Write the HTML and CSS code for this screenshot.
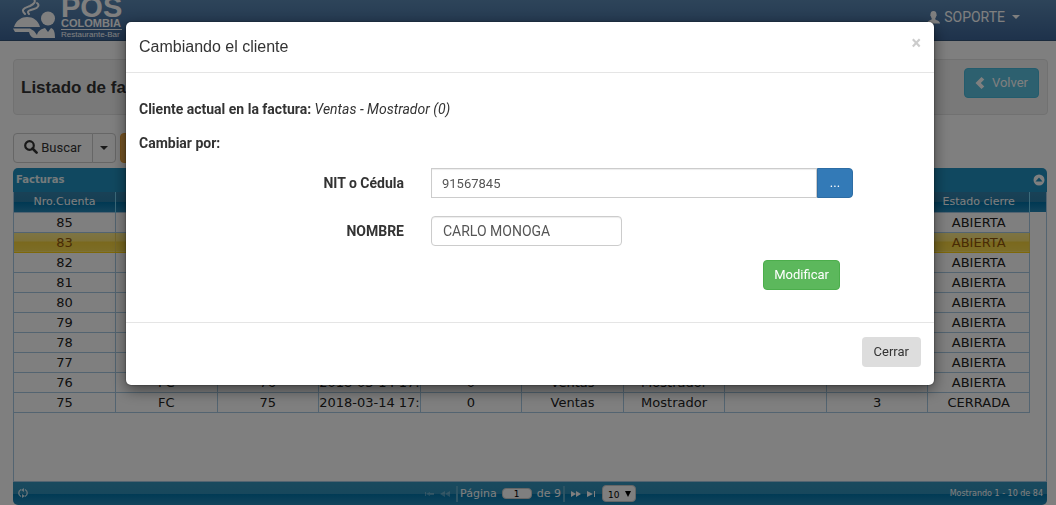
FILE: index.html
```html
<!DOCTYPE html>
<html lang="es">
<head>
    <meta charset="UTF-8">
    <meta name="viewport" content="width=device-width, initial-scale=1.0">
    <title>POS Colombia - Listado de facturas</title>
    <link rel="stylesheet" href="styles.css">
</head>
<body>

<!-- Barra superior -->
<nav class="navbar">
    <a href="#" class="brand">
        <svg class="brand-icon" width="43" height="40" viewBox="0 0 43 40">
            <g fill="none" stroke="#fff" stroke-width="2" stroke-linecap="round">
                <path d="M12 14C7 9 12 8 17 6C21 4 23 2 21 -1"/>
                <path d="M16 14C13 11 17 10 21 9C25 8 27 5 24 3"/>
            </g>
            <path fill="#fff" d="M1 27C3 20 9 17 14 17C20 17 25 20 27 27Z"/>
            <path fill="#fff" d="M0 28.500H17L21 31L24 35C25 31 28 29 32 28L35 32L38 28C41 29 42 32 42 38H22C19 38 17 36 16 32H2Z"/>
            <circle fill="#fff" cx="35" cy="18.500" r="7"/>
        </svg>
        <span class="brand-text">
            <span class="brand-pos">POS</span>
            <span class="brand-name">COLOMBIA</span>
            <span class="brand-sub">Restaurante-Bar</span>
        </span>
    </a>
    <a href="#" class="user-menu">
        <svg width="13" height="13" viewBox="0 0 13 13"><path fill="currentColor" d="M6.500 0C8.700 0 9.600 1.600 9.500 3.500C9.900 3.800 9.700 5 9.200 5.300C9 6.500 8.200 7.200 8.200 8C8.200 9.300 13 9.300 13 12.500H0C0 9.300 4.800 9.300 4.800 8C4.800 7.200 4 6.500 3.800 5.300C3.300 5 3.100 3.800 3.500 3.500C3.400 1.600 4.300 0 6.500 0Z"/></svg>
        <span>SOPORTE</span>
        <span class="caret"></span>
    </a>
</nav>

<main class="page">
    <div class="well">
        <h1>Listado de facturas</h1>
        <button type="button" class="btn btn-info">
            <svg width="10" height="12" viewBox="0 0 10 12"><path fill="currentColor" d="M6.500 0L9.300 2.500L5.800 6L9.300 9.500L6.500 12L0.500 6Z"/></svg>
            Volver
        </button>
    </div>

    <div class="toolbar">
        <div class="btn-group">
            <button type="button" class="btn btn-default">
                <svg width="14" height="14" viewBox="0 0 14 14"><circle cx="5.500" cy="5.500" r="4.300" fill="none" stroke="currentColor" stroke-width="2.200"/><path d="M8.500 8.500L12.600 12.600" stroke="currentColor" stroke-width="2.600" stroke-linecap="round"/></svg>
                Buscar
            </button>
            <button type="button" class="btn btn-default btn-toggle" aria-label="Opciones"><span class="caret"></span></button>
        </div>
        <button type="button" class="btn btn-warning" aria-label="Cambiar cliente">
            <svg width="14" height="14" viewBox="0 0 14 14"><path fill="currentColor" d="M0 14V10L9 1L13 5L4 14Z"/></svg>
        </button>
    </div>

    <!-- Grid de facturas -->
    <section class="grid">
        <div class="grid-title">
            <span>Facturas</span>
            <svg width="12" height="12" viewBox="0 0 12 12"><circle cx="6" cy="6" r="5.500" fill="#fff"/><path fill="#2191c0" d="M6 3.500L9.500 7.500H2.500Z"/></svg>
        </div>
        <div class="grid-head"></div>
        <div class="grid-body">
            <table>
                <thead>
                    <tr><th>Nro.Cuenta</th><th>Tipo</th><th>Numero</th><th>Fecha</th><th>Cliente</th><th>Nombre</th><th>Apellido</th><th>Mesa</th><th>Cierre</th><th>Estado cierre</th></tr>
                </thead>
                <tbody>
                    <tr><td>85</td><td>FC</td><td>85</td><td>2018-03-14 17:</td><td>0</td><td>Ventas</td><td>Mostrador</td><td></td><td></td><td>ABIERTA</td></tr>
                    <tr class="selected"><td>83</td><td>FC</td><td>83</td><td>2018-03-14 17:</td><td>0</td><td>Ventas</td><td>Mostrador</td><td></td><td></td><td>ABIERTA</td></tr>
                    <tr><td>82</td><td>FC</td><td>82</td><td>2018-03-14 17:</td><td>0</td><td>Ventas</td><td>Mostrador</td><td></td><td></td><td>ABIERTA</td></tr>
                    <tr><td>81</td><td>FC</td><td>81</td><td>2018-03-14 17:</td><td>0</td><td>Ventas</td><td>Mostrador</td><td></td><td></td><td>ABIERTA</td></tr>
                    <tr><td>80</td><td>FC</td><td>80</td><td>2018-03-14 17:</td><td>0</td><td>Ventas</td><td>Mostrador</td><td></td><td></td><td>ABIERTA</td></tr>
                    <tr><td>79</td><td>FC</td><td>79</td><td>2018-03-14 17:</td><td>0</td><td>Ventas</td><td>Mostrador</td><td></td><td></td><td>ABIERTA</td></tr>
                    <tr><td>78</td><td>FC</td><td>78</td><td>2018-03-14 17:</td><td>0</td><td>Ventas</td><td>Mostrador</td><td></td><td></td><td>ABIERTA</td></tr>
                    <tr><td>77</td><td>FC</td><td>77</td><td>2018-03-14 17:</td><td>0</td><td>Ventas</td><td>Mostrador</td><td></td><td></td><td>ABIERTA</td></tr>
                    <tr><td>76</td><td>FC</td><td>76</td><td>2018-03-14 17:</td><td>0</td><td>Ventas</td><td>Mostrador</td><td></td><td></td><td>ABIERTA</td></tr>
                    <tr><td>75</td><td>FC</td><td>75</td><td>2018-03-14 17:</td><td>0</td><td>Ventas</td><td>Mostrador</td><td></td><td>3</td><td>CERRADA</td></tr>
                </tbody>
            </table>
        </div>
        <div class="pager">
            <div class="pager-side">
                <svg width="10" height="10" viewBox="0 0 10 10"><g fill="none" stroke="#d0e8f2" stroke-width="1.300"><path d="M3 1.500C0 3 0 7 3 8.500M7 1.500C10 3 10 7 7 8.500"/></g><path fill="#d0e8f2" d="M6 0L3 2L6 4ZM4 6L7 8L4 10Z"/></svg>
            </div>
            <div class="pager-center">
                <svg class="off" width="9" height="6" viewBox="0 0 9 6"><path fill="#fff" d="M0 1H1V5H0ZM1 3L5 1V5ZM5 2H9V4H5Z"/></svg>
                <svg class="off" width="10" height="6" viewBox="0 0 10 6"><path fill="#fff" d="M0 3L5 0V6ZM5 3L10 0V6Z"/></svg>
                <span class="pager-page">
                    <label for="pagina">Página</label>
                    <input type="text" id="pagina" value="1">
                    <span>de 9</span>
                </span>
                <svg width="10" height="6" viewBox="0 0 10 6"><path fill="#fff" d="M0 0L5 3L0 6ZM5 0L10 3L5 6Z"/></svg>
                <svg width="9" height="6" viewBox="0 0 9 6"><path fill="#fff" d="M0 0L6 3L0 6ZM7 0H8V6H7Z"/></svg>
                <span class="pager-rows">
                    <select aria-label="Filas por página">
                        <option>10</option>
                        <option>20</option>
                        <option>30</option>
                    </select>
                    <svg width="6" height="6" viewBox="0 0 6 6"><path d="M0 0H6L3 6Z"/></svg>
                </span>
            </div>
            <div class="pager-side pager-info">Mostrando 1 - 10 de 84</div>
        </div>
    </section>
</main>

<!-- Modal cambiar cliente -->
<div class="modal-overlay">
    <div class="modal" role="dialog" aria-labelledby="modalTitle">
        <div class="modal-header">
            <h2 id="modalTitle">Cambiando el cliente</h2>
            <button type="button" class="close" aria-label="Cerrar ventana">×</button>
        </div>
        <form class="modal-body">
            <p><b>Cliente actual en la factura:</b> <i>Ventas - Mostrador (0)</i></p>
            <p><b>Cambiar por:</b></p>
            <div class="form-row">
                <label for="nit">NIT o Cédula</label>
                <div class="input-group">
                    <input type="text" id="nit" class="form-control" value="91567845">
                    <button type="button" class="btn btn-primary">...</button>
                </div>
            </div>
            <div class="form-row">
                <label for="nombre">NOMBRE</label>
                <input type="text" id="nombre" class="form-control name" value="CARLO MONOGA">
            </div>
            <div class="form-actions">
                <button type="button" class="btn btn-success">Modificar</button>
            </div>
        </form>
        <div class="modal-footer">
            <button type="button" class="btn btn-close">Cerrar</button>
        </div>
    </div>
</div>

</body>
</html>
```
FILE: styles.css
```css
* {
    box-sizing: border-box;
}
body {
    margin: 0;
    font-family: Roboto, "Liberation Sans", Arial, sans-serif;
    font-size: 13px;
    line-height: 18px;
    color: #333;
    background: #fff;
    overflow: hidden;
}
svg {
    flex: none;
}
button, input, select {
    font: inherit;
}

/* Navbar */
.navbar {
    display: flex;
    justify-content: space-between;
    height: 41px;
    padding: 0 36px 0 13px;
    background: linear-gradient(#5c89b4, #3d6597);
    border-bottom: 1px solid #345578;
    overflow: hidden;
}
.navbar a {
    color: #fff;
    text-decoration: none;
}
.brand {
    display: flex;
    gap: 5px;
}
.brand-text {
    display: flex;
    flex-direction: column;
    justify-content: flex-end;
    width: 61px;
    font-family: "Liberation Sans", Arial, sans-serif;
    white-space: nowrap;
}
.brand-pos {
    font-size: 29px;
    font-weight: bold;
    line-height: 22px;
}
.brand-name {
    font-size: 11px;
    font-weight: bold;
    line-height: 11px;
    border-bottom: 1px solid #fff;
}
.brand-sub {
    font-size: 8px;
    line-height: 10px;
}
.user-menu {
    display: flex;
    align-items: center;
    align-self: flex-start;
    gap: 4px;
    height: 34px;
    font-size: 14px;
}
.caret {
    border: 4px solid transparent;
    border-top-color: currentColor;
    border-bottom: 0;
}
.user-menu .caret {
    margin-left: 3px;
}

/* Page */
.page {
    padding: 18px 8px 0 13px;
}
.well {
    display: flex;
    justify-content: space-between;
    align-items: flex-start;
    height: 56px;
    padding: 8px 8px 8px 7px;
    background: #f3f3f3;
    border: 1px solid #e3e3e3;
    border-radius: 4px;
}
.well h1 {
    margin: 8px 0 0;
    font-family: "Liberation Sans", Arial, sans-serif;
    font-size: 17px;
    line-height: 24px;
}
.btn {
    height: 30px;
    padding: 0 10px;
    border: 1px solid transparent;
    border-radius: 4px;
    color: #fff;
    white-space: nowrap;
}
.btn svg {
    vertical-align: -2px;
}
.btn-info {
    background: #5bc0de;
    border-color: #46b8da;
}
.btn-info svg {
    margin-right: 4px;
}
.btn-default {
    background: #fff;
    border-color: #ccc;
    color: #333;
}
.btn-warning {
    background: #f0ad4e;
    border-color: #eea236;
}
.btn-primary {
    background: #337ab7;
    border-color: #2e6da4;
}
.btn-success {
    background: #5cb85c;
    border-color: #4cae4c;
}
.btn-close {
    padding: 0 11px;
    background: #ddd;
    color: #333;
}
.toolbar {
    display: flex;
    gap: 4px;
    margin: 18px 0 5px;
}
.btn-group {
    display: flex;
}
.btn-group .btn:first-child {
    padding-right: 11px;
    border-radius: 4px 0 0 4px;
}
.btn-group .btn-toggle {
    display: flex;
    align-items: center;
    margin-left: -1px;
    padding: 0 7px;
    border-radius: 0 4px 4px 0;
}

/* Grid */
.grid {
    margin-right: 1px;
    font-family: Verdana, "DejaVu Sans", sans-serif;
    font-size: 13px;
}
.grid-title {
    display: flex;
    justify-content: space-between;
    align-items: center;
    height: 24px;
    padding: 0 2px 0 3px;
    background: #2191c0;
    border-radius: 5px 5px 0 0;
    color: #eaf5f7;
    font-size: 10px;
    font-weight: bold;
}
.grid-head {
    height: 20px;
    margin-bottom: -20px;
    background: linear-gradient(#3383ad, #2b7fa9 50%, #0070a5 50%, #2588b8);
}
.grid-body {
    height: 290px;
    padding-right: 16px;
    border: 1px solid #a6c9e2;
    border-top: 0;
}
.grid table {
    position: relative;
    width: 100%;
    table-layout: fixed;
    border-collapse: collapse;
}
.grid th {
    height: 20px;
    padding: 0;
    border-right: 1px solid #77d5f7;
    color: #fff;
    font-size: 11px;
    font-weight: normal;
    white-space: nowrap;
}
.grid td {
    height: 20px;
    padding: 0;
    border: 1px solid #a6c9e2;
    border-left: 0;
    color: #222;
    line-height: 19px;
    text-align: center;
    white-space: nowrap;
    overflow: hidden;
}
.grid .selected td {
    background: linear-gradient(#fbe98c, #f9e06c 50%, #f5d23c 50%, #f8da4e);
    border-right-color: #e5cd5a;
    border-bottom-color: #fcd113;
    color: #915608;
}
.pager {
    display: flex;
    align-items: center;
    height: 23px;
    padding: 0 4px 0 5px;
    background: linear-gradient(#3394bd, #308fb8 50%, #0074a9 50%, #2589b8);
    border-radius: 0 0 5px 5px;
    color: #fff;
    font-size: 11px;
}
.pager-side {
    flex: 1;
    line-height: 10px;
}
.pager-center {
    display: flex;
    align-items: center;
    gap: 6px;
}
.pager-center .off {
    opacity: 0.3;
}
.pager-page {
    display: flex;
    align-items: center;
    gap: 5px;
    height: 16px;
    padding: 0 2px;
    border: 2px solid #5aa9c9;
    border-width: 0 2px;
}
.pager-center input {
    width: 30px;
    height: 11px;
    padding: 0;
    border: 1px solid #ccc;
    border-radius: 4px;
    font-size: 9px;
    text-align: center;
}
.pager-rows {
    display: flex;
    align-items: center;
}
.pager-rows select {
    appearance: none;
    width: 34px;
    height: 17px;
    padding: 0 0 0 5px;
    border: 1px solid #ccc;
    border-radius: 4px;
    background: #fff;
    color: #000;
    font-size: 9px;
}
.pager-rows svg {
    margin-left: -11px;
    margin-right: 5px;
    pointer-events: none;
}
.pager-info {
    font-size: 8px;
    text-align: right;
}

/* Modal */
.modal-overlay {
    position: fixed;
    top: 0;
    right: 0;
    bottom: 0;
    left: 0;
    padding: 22px 122px 0 126px;
    background: rgba(0, 0, 0, 0.5);
}
.modal {
    background: #fff;
    border-radius: 5px;
    box-shadow: 0 5px 15px rgba(0, 0, 0, 0.5), 0 0 2px rgba(0, 0, 0, 0.6);
}
.modal-header {
    display: flex;
    justify-content: space-between;
    padding: 13px 13px 14px;
    border-bottom: 1px solid #e5e5e5;
}
.modal-header h2 {
    margin: 0;
    font-family: "Liberation Sans", Arial, sans-serif;
    font-size: 16px;
    font-weight: normal;
    line-height: 23px;
}
.close {
    height: 16px;
    padding: 0;
    border: 0;
    background: none;
    color: #ccc;
    font-size: 18px;
    font-weight: bold;
    line-height: 16px;
}
.modal-body {
    padding: 27px 13px 32px;
}
.modal-body p {
    margin: 0 0 16px;
    font-size: 14px;
}
.form-row {
    display: flex;
    gap: 27px;
    margin-bottom: 18px;
}
.form-row label {
    width: 265px;
    font-size: 14px;
    font-weight: bold;
    line-height: 30px;
    text-align: right;
}
.form-control {
    height: 30px;
    padding: 0 11px;
    border: 1px solid #ccc;
    border-radius: 4px;
    background: #fff;
    box-shadow: inset 0 1px 1px rgba(0, 0, 0, 0.075);
    color: #555;
}
.form-control.name {
    width: 191px;
    font-size: 14px;
}
.input-group {
    display: flex;
    width: 422px;
}
.input-group .form-control {
    flex: 1;
    min-width: 0;
    padding: 0 10px;
    border-radius: 0;
}
.input-group .btn {
    width: 36px;
    border-radius: 0 4px 4px 0;
}
.form-actions {
    display: flex;
    justify-content: flex-end;
    padding-right: 81px;
    margin-top: -4px;
}
.modal-footer {
    display: flex;
    justify-content: flex-end;
    padding: 14px 13px 18px;
    border-top: 1px solid #e5e5e5;
}
```
